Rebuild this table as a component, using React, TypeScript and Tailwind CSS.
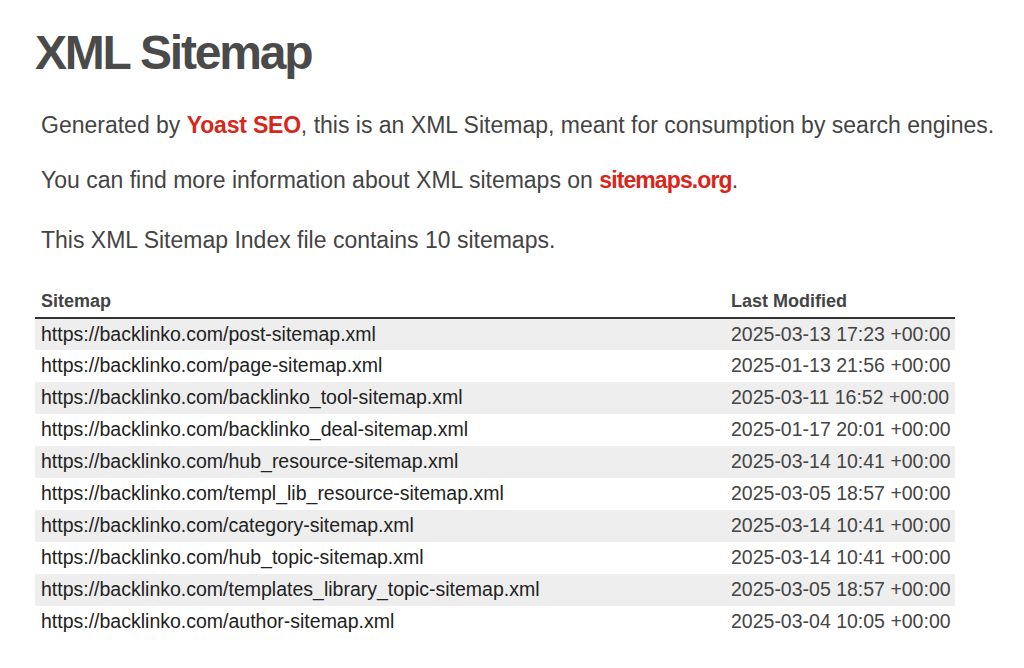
import React from 'react';

const sitemaps = [
  ['https://backlinko.com/post-sitemap.xml', '2025-03-13 17:23 +00:00'],
  ['https://backlinko.com/page-sitemap.xml', '2025-01-13 21:56 +00:00'],
  ['https://backlinko.com/backlinko_tool-sitemap.xml', '2025-03-11 16:52 +00:00'],
  ['https://backlinko.com/backlinko_deal-sitemap.xml', '2025-01-17 20:01 +00:00'],
  ['https://backlinko.com/hub_resource-sitemap.xml', '2025-03-14 10:41 +00:00'],
  ['https://backlinko.com/templ_lib_resource-sitemap.xml', '2025-03-05 18:57 +00:00'],
  ['https://backlinko.com/category-sitemap.xml', '2025-03-14 10:41 +00:00'],
  ['https://backlinko.com/hub_topic-sitemap.xml', '2025-03-14 10:41 +00:00'],
  ['https://backlinko.com/templates_library_topic-sitemap.xml', '2025-03-05 18:57 +00:00'],
  ['https://backlinko.com/author-sitemap.xml', '2025-03-04 10:05 +00:00'],
];

export default function App() {
  return (
    <div className="min-h-screen bg-white pl-[35px] pt-[23px] text-[#444] font-['Liberation_Sans',Arial,sans-serif]">
      <h1 className="text-[48px] font-bold leading-[60px] tracking-[-2.2px] text-[#4a4a4a]">XML Sitemap</h1>
      <div className="pl-[6px] pt-[27px] text-[23px] leading-[30px] whitespace-nowrap">
        <p>
          Generated by <a className="font-bold tracking-[-0.2px] text-[#d8261a]">Yoast SEO</a>, this is an XML Sitemap, meant for consumption by search engines.
        </p>
        <p className="mt-[25px]">
          You can find more information about XML sitemaps on <a className="font-bold tracking-[-0.9px] text-[#d8261a]">sitemaps.org</a>.
        </p>
        <p className="mt-[30px]">This XML Sitemap Index file contains 10 sitemaps.</p>
      </div>
      <table className="mt-[34px] w-[920px] border-collapse text-[19.5px]">
        <thead>
          <tr className="border-b-2 border-[#333]">
            <th className="pl-[6px] pb-[4px] text-left text-[18px] font-bold leading-[24px] text-[#444]">Sitemap</th>
            <th className="w-[230px] pl-[6px] pb-[4px] text-left text-[18px] font-bold leading-[24px] text-[#444]">Last Modified</th>
          </tr>
        </thead>
        <tbody>
          {sitemaps.map(([url, date], i) => (
            <tr key={url} className={i % 2 === 0 ? 'bg-[#eeeeee]' : 'bg-white'}>
              <td className="h-[32px] pl-[6px] text-[#222]">{url}</td>
              <td className="h-[32px] pl-[6px] text-[#444]">{date}</td>
            </tr>
          ))}
        </tbody>
      </table>
    </div>
  );
}
